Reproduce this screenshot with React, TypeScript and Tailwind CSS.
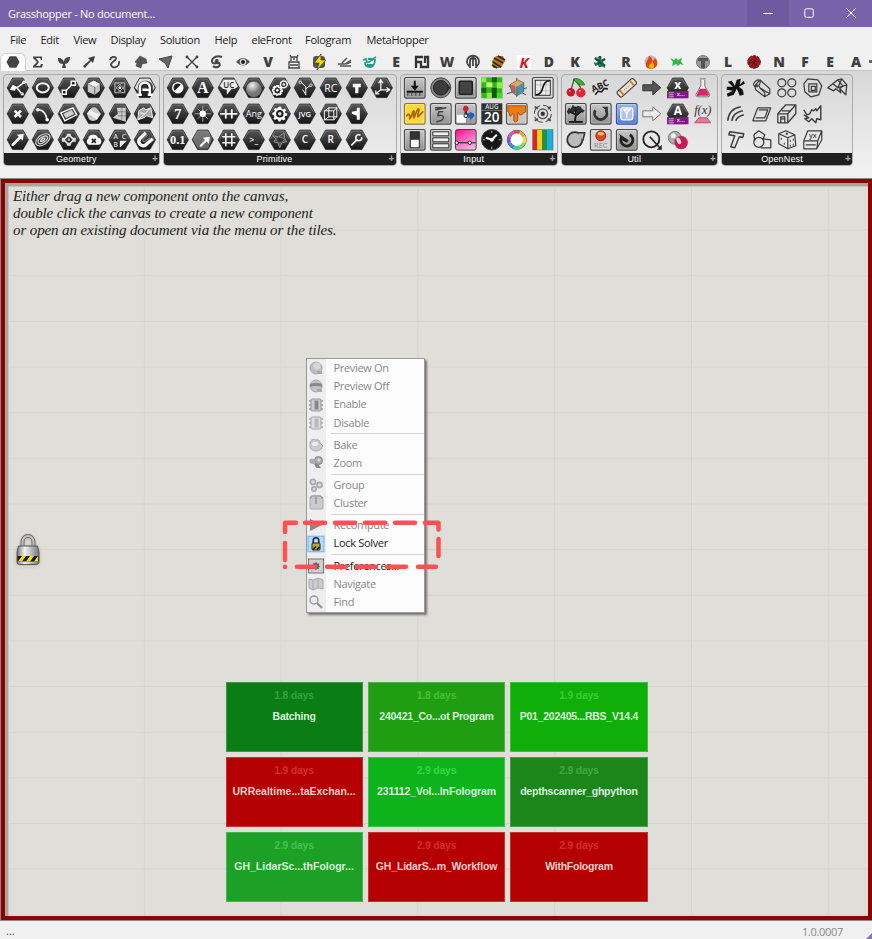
import React from "react";

type Icon = React.ReactNode;

const line = { fill: "none", stroke: "#f4f4f4", strokeWidth: 1.6, strokeLinecap: "round", strokeLinejoin: "round" } as const;
const ink = { fill: "none", stroke: "#3c3c3c", strokeWidth: 1.2, strokeLinejoin: "round" } as const;

function Cell({ children }: { children?: React.ReactNode }) {
  return (
    <svg viewBox="-12.8 -12.8 25.6 25.6" className="block h-[25.6px] w-[25.6px]">
      {children}
    </svg>
  );
}

function Hex({ children }: { children?: React.ReactNode }) {
  return (
    <Cell>
      <path d="M-10.7 0L-5.2-9.8H5.2L10.7 0L5.2 9.8H-5.2Z" fill="url(#hexFill)" stroke="#111" strokeWidth=".6" strokeLinejoin="round" />
      <path d="M-9 -1.2L-4.7-8.8H4.7L9-1.2" fill="none" stroke="#8b8b8b" strokeWidth=".7" opacity=".8" />
      {children}
    </Cell>
  );
}

function Box({ children, fill = "url(#boxFill)", stroke = "#4a4a4a" }: { children?: React.ReactNode; fill?: string; stroke?: string }) {
  return (
    <Cell>
      <rect x="-10.3" y="-10.3" width="20.6" height="20.6" rx="1.6" fill={fill} stroke={stroke} strokeWidth="1.2" />
      <rect x="-9.2" y="-9.2" width="18.4" height="18.4" rx="1" fill="none" stroke="#fff" strokeWidth=".7" opacity=".45" />
      {children}
    </Cell>
  );
}

function T({ s, size = 10, y = 3.6, x = 0, fill = "#fff", serif = false, w = 700, italic = false }: { s: string; size?: number; y?: number; x?: number; fill?: string; serif?: boolean; w?: number; italic?: boolean }) {
  return (
    <text
      x={x}
      y={y}
      textAnchor="middle"
      fontSize={size}
      fontWeight={w}
      fill={fill}
      fontStyle={italic ? "italic" : "normal"}
      className={serif ? "font-['Liberation_Serif',serif]" : "font-['Open_Sans',sans-serif]"}
    >
      {s}
    </text>
  );
}

const gear = "M-1.3-7H1.3L1.8-5L3.2-4.4L5-5.4L6.4-3.6L5.2-2L5.6-.8L7.4-.2V1.8L5.4 2.3L4.8 3.6L5.6 5.2L4 6.6L2.4 5.6L1.2 6L.6 7.6H-1.2L-1.9 5.8L-3.2 5.2L-5 6.2L-6.3 4.6L-5.3 3L-5.8 1.6L-7.4 1V-1L-5.6-1.6L-5-3L-6-4.6L-4.4-6L-2.8-5Z";

const geometry: Icon[] = [
  <Hex><path d="M7-6L-1 0L4 6M-1 0H-6" {...line} strokeWidth="1.5" /><path d="M-8 2L-5-3L-1-1L-3 3Z" fill="#fff" /><circle cx="6.3" cy="-5.5" r="1.8" fill="#fff" /><circle cx="4.5" cy="6.2" r="1.8" fill="#ccc" /></Hex>,
  <Hex><path d="M-3.2-3.2L3.2 3.2M3.2-3.2L-3.2 3.2" {...line} strokeWidth="2.7" strokeLinecap="butt" /></Hex>,
  <Hex><path d="M-5 5L2-2" {...line} strokeWidth="2.7" /><path d="M6-6L-1-5L5 1Z" fill="#fff" /></Hex>,
  <Hex><ellipse rx="6" ry="4.6" {...line} strokeWidth="2" /></Hex>,
  <Hex><path d="M-5-4C1-4 4 1 4 6" {...line} /><circle cx="-5" cy="-4" r="1.7" fill="#fff" /><circle cx="4.4" cy="6" r="1.8" fill="#fff" /></Hex>,
  <Hex><g transform="rotate(-35)" {...line} strokeWidth="1.2"><ellipse rx="8" ry="4.8" stroke="#ccc" /><ellipse rx="5.4" ry="2.7" stroke="#ddd" /><ellipse rx="2.6" ry="1" /></g></Hex>,
  <Hex><path d="M-4 4L4-4" {...line} /><path d="M-6.5 2.5H-2.5V6.5H-6.5ZM2.5-6.5H6.5V-2.5H2.5Z" fill="#222" stroke="#fff" strokeWidth="1.5" /></Hex>,
  <Hex><path d="M-8-1L4-6L8 1L-4 7Z" fill="#3a3a3a" stroke="#fff" strokeWidth="1.4" /><path d="M-5.5 0L3-4L5.5 .3L-3 4.5Z" fill="#cfcfcf" /></Hex>,
  <Hex><path d="M0-5L5 0L0 5L-5 0Z" {...line} /><path d="M-2-6H2V-3H-2ZM-2 3H2V6H-2ZM-7-2H-4V2H-7ZM4-2H7V2H4Z" fill="#ddd" /><circle r="1.2" fill="#bbb" /></Hex>,
  <Hex><path d="M-6-4L0-7L6-4V3L1 7L-6 4Z" fill="#c9c9c9" /><path d="M-6-4L1-1V7" fill="none" stroke="#666" /><path d="M-6-4L0-7L6-4L1-1Z" fill="#f5f5f5" /></Hex>,
  <Hex><path d="M-7 0L-3-5C0-8 3-6 4-4L7 0L3 6C0 8-4 7-5 5Z" fill="#c8c8c8" /><path d="M-3-5C-1-1 3 0 7 0L3 6C0 3-4 1-7 0Z" fill="#f0f0f0" /></Hex>,
  <Hex><path d="M-5 5A3.5 3.5 0 0 1-5.5-1A4 4 0 0 1-1-5A4 4 0 0 1 4-2A3.6 3.6 0 0 1 5 5Z" fill="#fff" /><path d="M-2-1L2 3M2-1L-2 3" stroke="#222" strokeWidth="1.7" /></Hex>,
  <Hex><g fill="none" stroke="#a8a8a8" strokeWidth=".9"><ellipse rx="6.5" ry="2.5" transform="rotate(45)" /><ellipse rx="6.5" ry="2.5" transform="rotate(-45)" /><rect x="-5" y="-5" width="10" height="10" /></g><circle r="1.5" fill="#ddd" /></Hex>,
  <Hex><path d="M-3-6L6-6V8L-7 4L-2 0Z" fill="#ccc" /><path d="M-3-2L6-2M-2 2H6M2-6V6" fill="none" stroke="#777" strokeWidth=".8" /></Hex>,
  <Hex><T s="A" x={-4} y={-1} size={6.8} fill="#ddd" w={600} /><T s="C" x={4} y={-1} size={6.8} fill="#ddd" w={600} /><T s="B" x={-4} y={7.6} size={6.8} fill="#ddd" w={600} /><path d="M0 1H7L0 8Z" fill="#eee" /></Hex>,
  <Hex><path d="M-10 0L-5-9H5L10 0L8 3V-2C6-9-6-9-7 0V3Z" fill="#ececec" opacity=".9" /><path d="M-5 7V0C-5-7 5-7 5 0V7M-5 2H5M-8 7H-3M3 7H8" stroke="#fff" strokeWidth="2.4" fill="none" /><path d="M-3 5V0C-3-4 3-4 3 0V1" fill="none" stroke="#222" strokeWidth="1.2" /></Hex>,
  <Hex><path d="M-6-3L-1-6L1-4L6-6L8 4L2 2L-1 4L-7 6Z" fill="#aaa" stroke="#eee" /><path d="M-5-1L0 0L-6 5M0 0L5-5" stroke="#fff" fill="none" /></Hex>,
  <Hex><path d="M1-7L-5-1C-8 3-3 8 1 5L8-1" {...line} strokeWidth="3.4" strokeLinecap="butt" /><path d="M3-5L-1-1C-3 1-1 3 1 1L5-2" fill="none" stroke="#999" strokeWidth="1" /></Hex>,
];

const primitive: Icon[] = [
  <Hex><circle r="5.7" fill="#fff" /><path d="M-3 3A4.2 4.2 0 1 1 3-3Z" fill="#222" /></Hex>,
  <Hex><T s="7" serif size={15} y={5} /></Hex>,
  <Hex><T s="0.1" serif size={12.5} y={4.3} /></Hex>,
  <Hex><T s="A" serif size={16} y={5.2} /></Hex>,
  <Hex><path d="M0-8V8M-8 0H8M-5-5L5 5M5-5L-5 5" stroke="#bbb" strokeWidth=".8" /><circle r="3.2" fill="#fff" /></Hex>,
  <Hex><path d="M-10 0L-5-9H5L9 0L5 9H-5Z" fill="#999" opacity=".6" /><path d="M-2 6L3 1" {...line} strokeWidth="2.2" /><path d="M7-3L6 4L0-2Z" fill="#fff" /></Hex>,
  <Hex><path d="M-9-2L-5-8H6L9-1L6 1L3 1L-2 7L-2 2L-6 1Z" fill="#ececec" /><T s="UC" x={0} y={0} size={8} fill="#222" w={600} /></Hex>,
  <Hex><path d="M-8 0H8M-3-4V4M3-4V4" {...line} strokeWidth="1.8" /></Hex>,
  <Hex><path d="M-3-6V6M3-6V6M-6-3H6M-6 3H6" {...line} strokeWidth="1.6" /></Hex>,
  <Hex><circle cy="1.5" r="7.8" fill="url(#sphere)" /></Hex>,
  <Hex><T s="Ang" size={9} w={400} y={3} /></Hex>,
  <Hex><T s=">_" size={9} w={600} y={3} /></Hex>,
  <Hex><g transform="translate(-2.4 2.5) scale(.63)"><path d={gear} fill="none" stroke="#fff" strokeWidth="2.5" /><circle r="2" fill="#fff" /></g><circle cx="4" cy="-3.4" r="3.4" {...line} /><circle cx="4" cy="-3.4" r="1.2" fill="#fff" /></Hex>,
  <Hex><path d={gear} fill="#fff" /><circle r="3.8" fill="#222" /><circle r="1.8" fill="#ddd" /></Hex>,
  <Hex><path d="M-7-4L-1-3L4-7L5-1L7 2L2 3L0 8L-2 3L-6 2L-4-1Z" fill="#4c4c4c" stroke="#999" strokeWidth=".9" /><path d="M-4-1L-1-3L5-1L2 3L-2 3Z" fill="#333" stroke="#888" strokeWidth=".7" /></Hex>,
  <Hex><path d="M1 7V-1L-4-6M1 1L5-2M1 7L-2 2" {...line} strokeWidth="1" /><g fill="none" stroke="#ddd"><circle cx="-4.5" cy="-5.5" r="1.3" /><circle cx="6" cy="-2.5" r="1.3" /></g></Hex>,
  <Hex><T s="JVG" size={7.6} y={2.8} w={600} /></Hex>,
  <Hex><T s="C" size={10} w={600} /></Hex>,
  <Hex><T s="RC" size={10.5} w={400} y={3.8} /></Hex>,
  <Hex><path d="M-6-3H3V6H-6ZM-6-3L-2-6H6L3-3M6-6V3L3 6M-2-6V3H6M-6 6L-2 3" {...line} strokeWidth="1" /></Hex>,
  <Hex><T s="R" size={10} w={600} /></Hex>,
  <Hex><path d="M-4-4H4V-.5H1.6V5.5H-1.6V-.5H-4Z" fill="#fff" /></Hex>,
  <Hex><path d="M3-6V6H0V2L-5 0V-2L0-3V-6Z" fill="#fff" /></Hex>,
  <Hex><circle cx="2" cy="-2" r="3" {...line} strokeDasharray="15 4" /><path d="M0 0L-5 5" {...line} strokeWidth="1.8" /></Hex>,
  <Hex><path d="M-1-7V2H7M-1 2L-6 6M-3-5L-1-8L1-5M5 0L8 2L5 4M-6 3V6H-3" {...line} strokeWidth="1.3" /></Hex>,
];

const rect = (x: number, y: number, w: number, h: number, fill: string) => <rect x={x} y={y} width={w} height={h} fill={fill} />;

const input: Icon[] = [
  <Box><path d="M-1-7H1V-2H4L0 3L-4-2H-1ZM-8 3H8V5H-8Z" fill="#111" /><path d="M-7 5V8M-3 5V8M1 5V8M5 5V8" stroke="#444" /></Box>,
  <Box fill="#ffd83d" stroke="#8d7330"><path d="M-8 2C-6-1-5 0-5 5C-3 4-3-2-1-3C0-2-2 3-1 4C1 1 2-5 4-5C5-3 2 1 3 3L8-2" {...line} stroke="#a86a00" strokeWidth="1.8" /></Box>,
  <Box>{rect(-4.5, -8, 9, 16, "#f8f8f8")}{rect(-4.5, -8, 9, 8, "#333")}<rect x="-4.5" y="-8" width="9" height="16" fill="none" stroke="#222" /></Box>,
  <Cell><circle r="10" fill="#858585" stroke="#444" /><path d="M5-5L10 0L5 5Z" fill="#333" /><circle r="7.3" fill="#3c3c3c" stroke="#222" /></Cell>,
  <Box><path d="M-5-6H1M-5-4L5-6M2-2H-2L-3 2C2 0 5 4 0 7L-4 8" {...line} stroke="#444" strokeWidth="1.5" /></Box>,
  <Box>{rect(-8, -8, 16, 4, "#eee")}{rect(-8, -2, 16, 4, "#eee")}{rect(-8, 4, 16, 4, "#eee")}<path d="M-8-8H8V-4H-8ZM-8-2H8V2H-8ZM-8 4H8V8H-8Z" fill="none" stroke="#333" /></Box>,
  <Box><rect x="-6.5" y="-6.5" width="13" height="13" rx="1" fill="#444" stroke="#222" strokeWidth="1.5" /></Box>,
  <Box>{rect(-9, 1, 9, 8, "#fff")}<path d="M0 1V-8M0 1H8" stroke="#333" strokeWidth="2.4" /><circle cy="-5" r="2.8" fill="#c8282a" /><path d="M9 2L4-2.5V6.5Z" fill="#135bcc" /><circle cx="3.5" cy="2" r="2.3" fill="#2569d0" /><circle cy="2" r="1.8" fill="#fff" stroke="#222" /></Box>,
  <Cell><rect x="-10.3" y="-10.3" width="20.6" height="20.6" rx="2" fill="url(#pink)" stroke="#444" /><path d="M-10 3H10" stroke="#222" /><circle cx="-9" cy="3" r="1.7" fill="#fff" stroke="#222" /><circle cx="4" cy="3" r="1.7" fill="#fff" stroke="#222" /></Cell>,
  <Cell>{rect(-10.5, -10.5, 21, 21, "#35b51e")}{rect(-10.5, -10.5, 5, 5, "#89ed4a")}{rect(-5.5, -5.5, 6, 5, "#c9f578")}{rect(0, -10.5, 5, 5, "#15610f")}{rect(5, -5.5, 5.5, 6, "#91ef42")}{rect(-10.5, 0, 5, 5, "#136311")}{rect(0, 0, 5, 10, "#0f570d")}{rect(-5, 5, 5, 5.5, "#90e943")}{rect(5, 5, 5.5, 5.5, "#4ed424")}</Cell>,
  <Cell>{rect(-10.5, -10.5, 21, 21, "#303030")}<T s="AUG" size={6.2} y={-4.9} fill="#ddd" w={600} />{rect(-10.5, -3.9, 21, 0.8, "#888")}<T s="20" size={13.5} y={8.2} fill="#fff" w={600} /></Cell>,
  <Cell><circle r="10.3" fill="#161616" stroke="#444" /><path d="M0 0L5-5M0 0L-6-2" stroke="#fff" strokeWidth="2" /><circle r="2" fill="#fff" /><path d="M0-9V-7M0 7V9M-9 0H-7M7 0H9" stroke="#bbb" /></Cell>,
  <Cell><path d="M-10 6L10 0M0-10V9M-8-2L9 7" stroke="#444" /><path d="M-7-3L1-8L7-5V4L0 8L-5 4Z" fill="#8eaf75" /><path d="M-7-3L1-8L7-5L0-1Z" fill="#e2a65b" /><path d="M0-1L7-5V4L0 8Z" fill="#4694ad" /><path d="M-7-3L0-1V8L-5 4Z" fill="#63ba51" /><path d="M-7-3L-2-2L-1 7L-5 4Z" fill="#cf5378" /><path d="M-7-3L1-8L7-5V4L0 8L-5 4ZM0-1V8" fill="none" stroke="#555" strokeWidth=".6" /></Cell>,
  <Box fill="#c8c5c0" stroke="#555"><path d="M-9-8H9V-2C6-1 5 2 3 1C1 0 3-2 1-1V6C0 9-3 9-3 6V0C-5-2-5 4-7 2C-8 1-7-2-9-2Z" fill="#ed7c10" stroke="#a04300" strokeWidth=".8" /></Box>,
  <Cell><circle r="9.5" fill="#fff" stroke="#555" />{["#e74747", "#ef9d3d", "#f1e23d", "#80da43", "#3dccad", "#3887dd", "#7558dd", "#dc50bd"].map((c, i) => <path key={c} d="M-3-7.2A8 8 0 0 1 3-7.2" stroke={c} strokeWidth="3.2" fill="none" transform={`rotate(${i * 45})`} />)}<circle r="5.7" fill="#fff" opacity=".7" /></Cell>,
  <Box fill="#d4d4d4"><rect x="-7.5" y="-7.5" width="15" height="15" fill="#eee" stroke="#333" /><path d="M-2-7V7M3-7V7M-7-3H7M-7 3H7" stroke="#aaa" strokeWidth=".7" /><path d="M-7 7C3 7-3-7 7-7" fill="none" stroke="#111" strokeWidth="1.6" /></Box>,
  <Cell><circle r="8.5" fill="none" stroke="#555" strokeWidth="1.1" strokeDasharray="10.35 3" /><circle r="4.8" fill="none" stroke="#555" strokeWidth="1.4" /><circle r="2.2" fill="#333" /><path d="M-8-7L-5-5M8-7L5-5M-8 7L-5 5M8 7L5 5" stroke="#444" strokeWidth="1.8" /></Cell>,
  <Cell>{rect(-10.5, -10.5, 21, 21, "#666")}{rect(-9.8, -9.8, 4, 19.8, "#e2202b")}{rect(-5.8, -9.8, 5, 19.8, "#f5ce19")}{rect(-.8, -9.8, 5, 19.8, "#24933b")}{rect(4.2, -9.8, 5.6, 19.8, "#1aaee7")}</Cell>,
];

const util: Icon[] = [
  <Cell><path d="M-2-9C1-5 5-2 6 3M-2-9C-2-4-5 0-5 4" fill="none" stroke="#287020" strokeWidth="1.3" /><path d="M-2-9C3-10 7-7 9-3C4-2 1-4-2-9Z" fill="#44a936" stroke="#287020" strokeWidth=".8" /><circle cx="-5" cy="4.5" r="4.2" fill="#c9182b" /><circle cx="5" cy="5" r="4.7" fill="#e02639" /><circle cx="4" cy="3" r="1" fill="#ffabb1" /><circle cx="-6" cy="3" r=".9" fill="#ffabb1" /></Cell>,
  <Box><path d="M-1 8L0 1L-6-2M0 2L6-3M0 1V-7M-7 8H7" stroke="#111" strokeWidth="1.8" fill="none" /><path d="M-9-2L-7-6L-5-5L-3-9L0-6L2-8L5-7L6-5L9-3L7-1L4-2L2 0L0-3L-2-1L-5-2L-7 1Z" fill="#202020" opacity=".9" /></Box>,
  <Cell><circle cx="-1" r="7.6" fill="#bbb" stroke="#333" strokeWidth="1.8" /><path d="M2-7H9L7 1" fill="#bbb" stroke="#333" strokeWidth="1.5" strokeLinejoin="round" /></Cell>,
  <Cell><g transform="rotate(-25)"><T s="ABC" size={9} y={1} fill="#222" /><path d="M-8 4L-4 2L-1 4L3 2L6 4" fill="none" stroke="#222" strokeWidth="1.6" /></g></Cell>,
  <Box><path d="M-5.5-3.5A6.2 6.2 0 1 0 5-4" fill="none" stroke="#333" strokeWidth="2.8" /><path d="M1-7H7V-2Z" fill="#333" /></Box>,
  <Box fill="#d4d4d4"><circle cy="-4" r="5" fill="#e5402b" stroke="#933" /><ellipse cy="-6" rx="3" ry="1.7" fill="#ffc65c" /><T s="REC" size={7.5} y={8.7} fill="#888" w={400} /></Box>,
  <Cell><g transform="rotate(-42)"><rect x="-11" y="-3.5" width="22" height="7" rx="2" fill="#eee3cd" stroke="#444" strokeWidth="1.2" /><path d="M-7-3V3M7-3V3" stroke="#c48733" strokeWidth="2" /><path d="M-4 0H4" stroke="#999" strokeDasharray="1.5 1" /></g></Cell>,
  <Box fill="url(#blue)" stroke="#3054a8"><rect x="-6" y="-6" width="12" height="12" rx="2" fill="#b2c3ed" stroke="#fff" strokeWidth="1.3" /><path d="M-3-4H3L0-.5ZM0-1V4" stroke="#fff" strokeWidth="1.4" fill="none" /></Box>,
  <Box><path d="M-5-3A6 6 0 1 0 3-5" fill="none" stroke="#222" strokeWidth="2.8" /><path d="M-8-6L2 .5L0 3L-4 1Z" fill="#222" /></Box>,
  <Cell><path d="M-9-3H1V-7L9 0L1 7V3H-9Z" fill="#555" stroke="#333" /></Cell>,
  <Cell><path d="M-9-3H1V-7L9 0L1 7V3H-9Z" fill="#ececec" stroke="#777" /></Cell>,
  <Cell><circle cx="-.5" cy="-.5" r="8" fill="none" stroke="#222" strokeWidth="1.8" /><path d="M-2-3L8 8" stroke="#222" strokeWidth="1.7" /><path d="M10 5V10H5Z" fill="#222" /></Cell>,
  ...["x", "A"].map((s) => <Hex key={s}><T s={s} size={12} y={.8} />{rect(-10.7, 3.2, 21.4, 7.3, "#86128d")}<path d="M-9 5H-4M-9 7H-4M-9 9H-4" stroke="#ddd" strokeWidth=".8" /><T s="x..." size={5.5} x={3} y={8.6} fill="#e7cbea" /></Hex>),
  <Cell><circle cx="-3" cy="-2" r="6.5" fill="#aaa" stroke="#666" strokeWidth=".7" /><circle cx="-4.5" cy="-4" r="2.5" fill="#f0f0f0" /><path d="M-4 0L3-1L0 6Z" fill="#666" /><circle cx="3.4" cy="2.8" r="6.5" fill="#c51a5a" stroke="#a44" strokeWidth=".5" /><ellipse cx="1" cy="1" rx="2" ry="3.5" fill="#fff" opacity=".8" transform="rotate(-25 1 1)" /></Cell>,
  <Cell><path d="M-3-9H3M-2-8V-2L-7 7Q-7 9-5 9H5Q7 9 7 7L2-2V-8" fill="#eee" stroke="#777" /><path d="M-3 1L-6 7Q-6 9-4 8H4Q7 8 6 6L3 1Z" fill="#d82567" /></Cell>,
  <Cell><T s="f(x)" size={12.5} y={0} fill="#333" serif italic w={400} /><path d="M-4 4H4L8 9H-8Z" fill="#e6799c" stroke="#be4c70" /></Cell>,
  <Cell />,
];

const nest: Icon[] = [
  <Cell><path d="M-8-6L-4-7L-1-2L1-8L5-9L4-3L8-7L9-4L3-1L7 2L8 7L4 8L1 1L-2 7L-8 9L-9 6L-3 3L-9 2L-9-1L-3-1Z" fill="#111" /></Cell>,
  <Cell><g {...ink} strokeWidth="1.6"><path d="M-8 7Q-7-5 5-7M-4 7Q-3-1 7-3M0 7Q1 3 8 1" /></g></Cell>,
  <Cell><path d="M-6-8L8-6L7-2.5L3.5-3L-1 8L-5 7L-1-4L-7-5Z" {...ink} strokeWidth="1.4" /></Cell>,
  <Cell><g {...ink}><path d="M-7-2L-2-8L8 1L8 6L3 9L-6 2ZM-7-2Q-3-4-2 0L8 6M-2 0L3 5V9" /><ellipse cx="-4.8" cy="-4.5" rx="3.8" ry="2.6" transform="rotate(-48 -4.8 -4.5)" /></g></Cell>,
  <Cell><path d="M-4-6H9L4 7H-9ZM-3-4H6L3 4H-6" {...ink} /></Cell>,
  <Cell><g {...ink} strokeWidth="1.3"><path d="M-8-5L-3-9L3-5L1 0" /><path d="M-8-5L-7 1" /><circle cx="-3" cy="2.5" r="5" /><path d="M1-1L9 0V8H-1" /></g></Cell>,
  <Cell><g {...ink} strokeWidth="1.2"><circle cx="-5" cy="-5" r="4" /><circle cx="5" cy="-5" r="4" /><circle cx="-5" cy="5" r="4" /><circle cx="5" cy="5" r="4" /></g></Cell>,
  <Cell><path d="M-9 0L-1-9H9V0L1 9H-9ZM-9 0H1V9M1 0L9-9M-6 9V3H-2V9M-6 5H-2M-5-3H4" {...ink} strokeWidth="1.3" /></Cell>,
  <Cell><g {...ink} strokeWidth="1.2"><path d="M-8-6L-1-9L8-5L9 6L1 9L-8 4ZM-8-6L1-2L8-5M1-2V9" /><path d="M-6-1H-5M-3 4H-2M3 1H4M6 5H7M3 6H4M6 0H7M-1-6H1" strokeWidth="2" /></g></Cell>,
  <Cell><g {...ink}><path d="M-5-9L5-8L9-2L6 7L-2 9L-8 4L-9-4Z" /><rect x="-4" y="-4" width="8" height="8" /><rect x="-1.5" y="-1.5" width="4" height="4" /></g></Cell>,
  <Cell><path d="M-9-4L-6 1L-3 0L-1-4L1-3L3-5L4-3L8-8V6L4 5L3 9L-1 5L-4 8L-8 5L-4 4L-9 1" {...ink} strokeWidth="1.4" /></Cell>,
  <Cell><path d="M-5-9H9L5 1H-9ZM-9 1H5L4 9H-9ZM9-9V0L4 9M-7 5H3" {...ink} /><T s="yx" size={7} y={-2} fill="#444" w={600} /></Cell>,
  <Cell><path d="M-10 0L0-8L4-9L9-3L8 7L2 1L3 5L-2 1L-4 3ZM-5-4L0 0L4-9M0 0L9-3M0-8L5-2L2 1" {...ink} strokeWidth="1.3" /></Cell>,
];

function Panel({ title, items, className }: { title: string; items: Icon[]; className: string }) {
  return (
    <section className={`flex h-[92px] shrink-0 flex-col overflow-hidden rounded-[4px] border border-[#aaa] bg-gradient-to-b from-[#d8d8d8] to-[#ededed] ${className}`}>
      <div className="grid h-[78px] shrink-0 grid-flow-col grid-rows-[repeat(3,25.6px)] justify-start pt-[.4px] pl-px">
        {items.map((item, i) => <React.Fragment key={i}>{item}</React.Fragment>)}
      </div>
      <div className="relative -mx-px flex h-[13px] items-center justify-center bg-[#202020] font-['Liberation_Sans',sans-serif] text-[9px] leading-none tracking-[.15px] text-white">
        <span className="-ml-[10px]">{title}</span>
        <span className="absolute right-[2px] bottom-px text-[10px] font-bold text-[#aaa]">+</span>
      </div>
    </section>
  );
}

const letter = (s: string) => <text y="5" textAnchor="middle" fontSize="14" fontWeight="800" fill="#3f3f3f" className="font-['Open_Sans',sans-serif]">{s}</text>;
const tabs: Icon[] = [
  <path d="M-6.5 0L-3.3-5.7H3.3L6.5 0L3.3 5.7H-3.3Z" fill="#444" />,
  <path d="M-5-5.5H4V-2H3L2-4H-2L1 0L-2 4H2L3 2H5L4 5.5H-5V4L-1 0L-5-4Z" fill="#444" />,
  <path d="M-2 6L-1 2C-5 2-6-1-6-4C-2-4-1-2 0 0C0-4 3-5 6-5C6-1 4 2 1 2L2 6Z" fill="#444" />,
  <path d="M-6 4L1-2L-1-4L6-6L4 1L2-1L-4 6Z" fill="#3f3f3f" />,
  <path d="M-5-2C-4-6 2-6 1-3C0-1-4 0-4 3C-3 7 5 6 4-1" fill="none" stroke="#444" strokeWidth="1.8" />,
  <path d="M-6 0L-1-6L5-3L6 1L1 2L0 6L-5 4L-4 1Z" fill="#555" stroke="#333" strokeWidth=".5" />,
  <path d="M-7-3L6-6L2 6L-1 1Z" fill="#666" stroke="#444" />,
  <g fill="#444"><path d="M-5-5L5 5M5-5L-5 5" stroke="#444" strokeWidth="1.4" /><circle cx="-5" cy="-5" r="1.4" /><circle cx="5" cy="-5" r="1.4" /><circle cx="-5" cy="5" r="1.4" /><circle cx="5" cy="5" r="1.4" /></g>,
  <path d="M5-5C-3-8-7-1-4 1C-1 3 2-2 0-2C-2-2-2 2 2 1C5 4-1 7-4 4" fill="none" stroke="#444" strokeWidth="2" />,
  <g><path d="M-7 0Q0-8 7 0Q0 7-7 0Z" fill="#555" /><circle r="3.2" fill="#ddd" /><circle r="2" fill="#222" /></g>,
  letter("V"),
  <g fill="none" stroke="#444" strokeWidth="1.3"><path d="M-3-1V-5H3V-1M-5 6V0H5V6M-6 6H6M-4 3H4M-3-5L-4-7M3-5L4-7M-1-3H1" /></g>,
  <g><rect x="-6" y="-6" width="12" height="12" rx="3" fill="#555" /><path d="M2-8L-5 1H0L-2 8L7-2H2Z" fill="#f8dc00" stroke="#333" strokeWidth=".7" /></g>,
  <g fill="none" stroke="#555" strokeWidth="1.5"><path d="M-7 2H0L6-2M-3 1L2-4M-5 4H6M1 2L6 0" /></g>,
  <g fill="none" stroke="#269b8c" strokeWidth="1.8"><path d="M-7-2L-4-3L-3 0C-1 2 2-3 6-5M-5 0C-5 4-3 5 0 5C4 5 5 0 5-3M-3 3L3 3M-2-3L4-3" /></g>,
  letter("E"),
  <path d="M-6 6V-5H1M-6 0H-1V5H6V-5H3V1" fill="none" stroke="#333" strokeWidth="2.3" />,
  letter("W"),
  <g fill="none" stroke="#444" strokeWidth="1.8"><path d="M-4 4A6 6 0 1 1 4 4M-3 6V-1A3 3 0 0 1 3-1V6M0-6V4" /></g>,
  <g><path d="M-6-1L-2-6L5-6L7-1L3 6L-5 6Z" fill="#b57a20" /><path d="M-5 0L3 5M-4-4L5 1M-6 3L-1 6M0-6L7-2" stroke="#2e2719" strokeWidth="1.7" /></g>,
  <g><rect x="-7" y="-7" width="14" height="14" fill="#fff" /><text y="5.5" textAnchor="middle" fontSize="15" fontWeight="700" fontStyle="italic" fill="#e20d1d" className="font-['Open_Sans',sans-serif]">K</text></g>,
  letter("D"), letter("K"),
  <g stroke="#204f39" strokeWidth="2.6"><path d="M-5-4L5 4M-5 3L5-3M0-6V5" /><path d="M-6 1L5 5M-2-5L3 1" stroke="#168351" strokeWidth="1.5" /></g>,
  letter("R"),
  <g><circle r="6.5" fill="#bbb" /><path d="M-4 6C-7 1-3-1-2-6C1-5 1-2 2-1L4-4C8 1 7 6 0 7Z" fill="#e84115" /><path d="M-2 5C-2 2 1 2 1-1C4 3 4 6 0 7Z" fill="#ffb900" /></g>,
  <path d="M-7-4L-3-2L-1-4L1-2L5-4L4 0L7 3L3 2L1 4L-1 2L-5 4L-4 0Z" fill="#31b845" />,
  <g><circle r="6.5" fill="#999" stroke="#777" /><path d="M-5-4H5V-1H2V6H-2V-1H-5Z" fill="#555" /></g>,
  letter("L"),
  <g><circle r="6.3" fill="#b71318" stroke="#40191a" strokeDasharray="3 1" /><path d="M-5-3L4 4M-3 5L4-5M-6 1L5-1M0-6L1 6" stroke="#501718" strokeWidth="1" /></g>,
  letter("N"), letter("F"), letter("E"), letter("A"),
];

const menuItems = [
  ["Preview On", "Preview Off", "Enable", "Disable"],
  ["Bake", "Zoom"],
  ["Group", "Cluster"],
  ["Recompute", "Lock Solver"],
  ["Preferences...", "Navigate", "Find"],
];

function Padlock() {
  return (
    <g>
      <path d="M-5.5-1V-7A5.5 6 0 0 1 5.5-7V-1" fill="none" stroke="#666" strokeWidth="4" />
      <path d="M-5.5-1V-7A5.5 6 0 0 1 5.5-7V-1" fill="none" stroke="#c4c4c4" strokeWidth="2" />
      <path d="M-9.5-3H9.5L11 3V13Q11 15.5 8.5 15.5H-8.5Q-11 15.5-11 13V3Z" fill="url(#metal)" stroke="#555" />
      <path d="M-10.5 7H10.5V12.5H-10.5Z" fill="#171717" />
      <path d="M-10 12.5L-6 7H-2L-6 12.5ZM-2 12.5L2 7H6L2 12.5ZM6 12.5L10 7V12.5Z" fill="#f3df19" />
    </g>
  );
}

const menuArt: Record<string, React.ReactNode> = {
  "Preview On": <g><circle r="6" fill="#bebebe" stroke="#aaa" /><circle cx="1" cy="-2" r="3.6" fill="#d7d7d7" /><path d="M1 3H6V6H1Z" fill="#aaa" /></g>,
  "Preview Off": <g><circle r="6" fill="#c4c4c4" stroke="#aaa" /><path d="M-6-2Q0-4 6-2V1Q0-1-6 1Z" fill="#888" /><path d="M1 3H6V6H1Z" fill="#aaa" /></g>,
  Enable: <g><path d="M-7-4H7M-7 0H7M-7 4H7" stroke="#aaa" strokeWidth="2.2" /><rect x="-5" y="-6" width="10" height="12" rx="1" fill="#ccc" stroke="#999" /><rect x="-1.5" y="-4.5" width="4" height="9" fill="#888" /></g>,
  Disable: <g><path d="M-7-4H7M-7 0H7M-7 4H7" stroke="#bbb" strokeWidth="2.2" /><rect x="-5" y="-6" width="10" height="12" rx="1" fill="#ddd" stroke="#aaa" /><rect x="-1.5" y="-4.5" width="4" height="9" fill="#bbb" /></g>,
  Bake: <g><path d="M-6-2Q-5-7 0-5Q4-6 4-2L7 1Q6 5 1 6Q-5 6-6 2Z" fill="#ccc" stroke="#aaa" /><ellipse cx="-1" cy="-1" rx="3" ry="2" fill="#eee" /></g>,
  Zoom: <g><circle cx="2.5" cy="-2.5" r="4" fill="#aaa" stroke="#888" /><circle cx="-4" cy="-2" r="2.6" fill="#aaa" /><path d="M-4 0L2 1L5 5L0 5L-1 2Z" fill="#888" /><circle cx="3" cy="-3" r="1.5" fill="#ddd" /></g>,
  Group: <g fill="#ddd" stroke="#aaa" strokeWidth="1.7"><circle cx="-3" cy="-3" r="2.6" /><circle cx="3.5" cy="0" r="2.6" /><circle cx="-2" cy="4" r="2.2" /></g>,
  Cluster: <g><rect x="-6" y="-5" width="13" height="11" rx="1" fill="#ccc" stroke="#aaa" /><path d="M-6-5L-4-7H4L7-5M0-6V1" stroke="#999" fill="none" strokeWidth="1.5" /></g>,
  Recompute: <path d="M-6-6L6 0L-6 6Z" fill="#888" />,
  "Lock Solver": <g><rect x="-8" y="-7.8" width="16" height="15.6" fill="#b9dcf6" stroke="#68b5ed" /><path d="M-2.8-1V-3.5A2.8 2.8 0 0 1 2.8-3.5V-1" fill="none" stroke="#222" strokeWidth="1.5" /><rect x="-4" y="-1" width="8" height="7" rx="1" fill="#bba92f" stroke="#222" /><path d="M-3 5.5L0 2.5M1 5.5L3.5 3" stroke="#111" strokeWidth="1.5" /></g>,
  "Preferences...": <g><rect x="-7.5" y="-7" width="15" height="14" fill="#cfcfcf" stroke="#777" /><g transform="scale(.5)"><path d={gear} fill="#555" /><circle r="2.6" fill="#ccc" /></g></g>,
  Navigate: <path d="M-7-5L-3-4L2-6L7-4V5L2 4L-3 6L-7 4ZM-3-4V6M2-6V4" fill="#ccc" stroke="#aaa" />,
  Find: <g fill="none" stroke="#999"><circle cx="-2" cy="-2" r="4" strokeWidth="1.4" /><path d="M1 1L6 6" strokeWidth="2.4" /></g>,
};

const tiles = [
  ["1.8 days", "Batching", "bg-[#0a7d14]", "text-[#34a13a]", "text-[#d9f2db]"],
  ["1.8 days", "240421_Co...ot Program", "bg-[#1f9e12]", "text-[#46bd39]", "text-[#d9f2db]"],
  ["1.9 days", "P01_202405...RBS_V14.4", "bg-[#10ae08]", "text-[#38cc30]", "text-[#d9f2db]"],
  ["1.9 days", "URRealtime...taExchan...", "bg-[#b40000]", "text-[#d62c2c]", "text-[#f3cece] tracking-normal"],
  ["2.9 days", "231112_Vol...InFologram", "bg-[#0eb31c]", "text-[#38d246]", "text-[#d9f2db] tracking-[-.1px]"],
  ["2.9 days", "depthscanner_ghpython", "bg-[#1c861a]", "text-[#44a742]", "text-[#d9f2db]"],
  ["2.9 days", "GH_LidarSc...thFologr...", "bg-[#1ca126]", "text-[#44c04d]", "text-[#d9f2db] tracking-normal"],
  ["2.9 days", "GH_LidarS...m_Workflow", "bg-[#b40000]", "text-[#d62c2c]", "text-[#f3cece] tracking-[-.18px]"],
  ["2.9 days", "WithFologram", "bg-[#b40000]", "text-[#d62c2c]", "text-[#f3cece]"],
];

function Defs() {
  const stops = (a: string, b: string) => <><stop stopColor={a} /><stop offset="1" stopColor={b} /></>;
  return (
    <svg className="absolute h-0 w-0">
      <defs>
        <linearGradient id="hexFill" x2="0" y2="1">{stops("#555", "#151515")}</linearGradient>
        <linearGradient id="boxFill" x2="0" y2="1">{stops("#c9c9c9", "#8f8f8f")}</linearGradient>
        <linearGradient id="blue" x2="0" y2="1">{stops("#9fb7ee", "#4772d8")}</linearGradient>
        <linearGradient id="pink" x2=".6" y2="1">{stops("#ee0b94", "#f8b2dc")}</linearGradient>
        <linearGradient id="metal"><stop stopColor="#777" /><stop offset=".35" stopColor="#f4f4f4" /><stop offset="1" stopColor="#777" /></linearGradient>
        <radialGradient id="sphere" cx=".4" cy=".25">{stops("#f4f4f4", "#777")}</radialGradient>
      </defs>
    </svg>
  );
}

export default function App() {
  return (
    <div className="flex h-[939px] w-[872px] flex-col overflow-hidden bg-[#f0f0f0] font-['Open_Sans','Noto_Sans',sans-serif]">
      <Defs />
      <header className="flex h-[26.5px] shrink-0 items-center justify-between bg-[#7862a9] text-white">
        <h1 className="pl-2 text-[11px] leading-none tracking-[-.27px]">Grasshopper - No document...</h1>
        <svg viewBox="0 0 125 26" className="h-[26px] w-[125px]" fill="none" stroke="white" strokeWidth="1">
          <path d="M0 0H42V26H0Z" fill="#705a9f" stroke="none" />
          <path d="M16 13.5H26M99.5 8.5L108.5 17.5M108.5 8.5L99.5 17.5" />
          <rect x="57.8" y="8.8" width="8.5" height="8.5" rx="1.5" />
        </svg>
      </header>
      <nav className="flex h-[26.5px] shrink-0 items-center pl-[10px] text-[11px] tracking-[-.3px] text-[#222]">
        <span className="w-[30.5px]">File</span><span className="w-[33px]">Edit</span><span className="w-[37px]">View</span>
        <span className="w-[49.5px]">Display</span><span className="w-[54.5px]">Solution</span><span className="w-[37px]">Help</span>
        <span className="w-[53.5px]">eleFront</span><span className="w-[61.5px]">Fologram</span><span>MetaHopper</span>
      </nav>
      <div className="flex h-[18px] shrink-0 items-center border-b border-[#c4c4c4]">
        {tabs.map((tab, i) => (
          <div key={i} className={`flex h-[18px] w-[25.55px] shrink-0 items-center justify-center ${i === 0 ? "rounded-t-md border border-b-0 border-[#d0d0d0] bg-white" : ""}`}>
            <svg viewBox="-9 -9 18 18" className="h-[18px] w-[18px] shrink-0">{tab}</svg>
          </div>
        ))}
        <span className="h-[3px] w-[3px] bg-[#666]" />
      </div>
      <div className="flex h-[107px] shrink-0 items-start bg-gradient-to-b from-[#d8d8d8] to-[#f0f0f0] to-90% pt-[3px] pl-[2.5px]">
        <Panel title="Geometry" items={geometry} className="mr-[2.5px] w-[157.5px]" />
        <Panel title="Primitive" items={primitive} className="mr-[3.5px] w-[234px]" />
        <Panel title="Input" items={input} className="mr-[3px] w-[157.5px]" />
        <Panel title="Util" items={util} className="mr-[3px] w-[157.5px]" />
        <Panel title="OpenNest" items={nest} className="w-[132px]" />
      </div>
      <main className="relative h-[743px] shrink-0 border border-r-0 border-[#898989] bg-[#8f0000] p-[4px]">
        <div className="flex h-full flex-col justify-between border-t-[3px] border-l-[3px] border-[#aaa5a1] bg-[#dfded9] bg-[linear-gradient(90deg,#d5d4ce_1px,transparent_1px),linear-gradient(#d5d4ce_1px,transparent_1px)] bg-[size:136.8px_45.65px] bg-[position:-1px_-2px] shadow-[inset_1px_1px_#c7c5c1]">
          <div className="mt-[2px] ml-[5px] font-['Liberation_Serif',serif] text-[15px] leading-[17px] tracking-[-.11px] text-[#222] italic">
            <p>Either drag a new component onto the canvas,</p>
            <p>double click the canvas to create a new component</p>
            <p>or open an existing document via the menu or the tiles.</p>
          </div>
          <div className="mb-[14.5px] ml-[217.5px] grid w-[422px] grid-cols-3 gap-[5.3px] font-['Liberation_Sans',sans-serif] font-bold">
            {tiles.map(([age, name, bg, muted, ink]) => (
              <div key={name} className={`flex h-[69.5px] flex-col items-center border border-white/20 pt-[5px] text-[10.5px] leading-[14px] tracking-[-.24px] ${bg}`}>
                <span className={muted}>{age}</span>
                <span className={`mt-[7px] whitespace-nowrap ${ink}`}>{name}</span>
              </div>
            ))}
          </div>
        </div>
        <svg viewBox="-14 -18 28 37" className="absolute top-[352px] left-[13px] h-[37px] w-[28px] drop-shadow-sm"><Padlock /></svg>
        <div className="absolute top-[179px] left-[304.5px] flex h-[254.5px] w-[119.5px] flex-col border border-[#999] bg-[linear-gradient(90deg,#eee_19px,#fcfcfc_19px)] text-[11px] tracking-[-.32px] shadow-[2px_2px_2px_#0007]">
          {menuItems.map((group, g) => (
            <React.Fragment key={g}>
              {g > 0 && <div className="my-[1.4px] ml-[24px] h-px shrink-0 bg-[#d4d4d4]" />}
              {group.map((label) => (
                <div key={label} className={`flex h-[18.25px] shrink-0 items-center whitespace-nowrap ${label === "Lock Solver" || label === "Preferences..." ? "text-[#222]" : "text-[#888]"}`}>
                  <svg viewBox="-9 -9 18 18" className="mr-[9px] h-[18px] w-[18px]">{menuArt[label]}</svg>
                  {label}
                </div>
              ))}
            </React.Fragment>
          ))}
        </div>
        <svg viewBox="280 518 164 54" className="absolute top-[339px] left-[279px] h-[54px] w-[164px]" fill="none" stroke="#fb5152" strokeWidth="4.5" strokeLinecap="round" strokeLinejoin="round">
          <path d="M296 522.7H285V532M305 522.7H325M335 522.7H355M365 522.7H385M395 522.7H415M425 522.7H438.5V529.5M285 543V560M285 566.8V567M438.5 539V556M297 566.8H315M327 566.8H346M357 566.8H376M387 566.8H406M418 566.8H436" />
        </svg>
      </main>
      <footer className="relative flex h-[18px] items-center justify-between pr-[29px] pl-[6px] text-[11px] text-[#888]">
        <span className="mt-[3px] text-[#555]">...</span><span className="mt-[5px] tracking-[-.3px]">1.0.0007</span>
        <svg viewBox="0 0 8 8" className="absolute right-0 bottom-0 h-2 w-2"><path d="M2 8L8 2V8Z" fill="#8877ae" /></svg>
      </footer>
    </div>
  );
}
